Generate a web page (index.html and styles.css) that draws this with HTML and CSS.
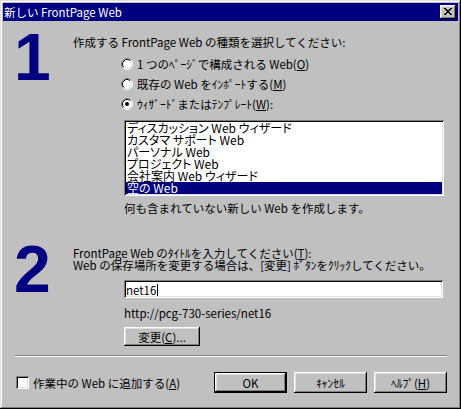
FILE: index.html
```html
<!DOCTYPE html>
<html lang="ja">
<head>
<meta charset="utf-8">
<title>新しい FrontPage Web</title>
<link rel="stylesheet" href="styles.css">
</head>
<body>
<div class="window">
  <div class="titlebar">
    <span class="title">新しい FrontPage Web</span>
    <div class="close">
      <svg class="close-x" width="8" height="7" viewBox="0 0 8 7" shape-rendering="crispEdges">
        <g fill="#000">
          <rect x="0" y="0" width="2" height="1"/><rect x="6" y="0" width="2" height="1"/>
          <rect x="1" y="1" width="2" height="1"/><rect x="5" y="1" width="2" height="1"/>
          <rect x="2" y="2" width="4" height="1"/>
          <rect x="3" y="3" width="2" height="1"/>
          <rect x="2" y="4" width="4" height="1"/>
          <rect x="1" y="5" width="2" height="1"/><rect x="5" y="5" width="2" height="1"/>
          <rect x="0" y="6" width="2" height="1"/><rect x="6" y="6" width="2" height="1"/>
        </g>
      </svg>
    </div>
  </div>
  <div class="client">
    <section class="step">
      <div class="num">1</div>
      <div class="step-body">
        <p class="prompt">作成する FrontPage Web の種類を選択してください:</p>
        <div class="radios">
          <div class="radio">
            <svg class="rb" width="12" height="12" viewBox="0 0 12 12"><circle cx="6" cy="6" r="5" fill="#fff"/><path d="M2.11 9.89 A5.5 5.5 0 0 1 9.89 2.11" fill="none" stroke="#808080"/><path d="M9.89 2.11 A5.5 5.5 0 0 1 2.11 9.89" fill="none" stroke="#fff"/><path d="M2.82 9.18 A4.5 4.5 0 0 1 9.18 2.82" fill="none" stroke="#000"/><path d="M9.18 2.82 A4.5 4.5 0 0 1 2.82 9.18" fill="none" stroke="#dfdfdf"/></svg>
            <span>1 つのﾍﾟｰｼﾞで構成される Web(<u>O</u>)</span>
          </div>
          <div class="radio">
            <svg class="rb" width="12" height="12" viewBox="0 0 12 12"><circle cx="6" cy="6" r="5" fill="#fff"/><path d="M2.11 9.89 A5.5 5.5 0 0 1 9.89 2.11" fill="none" stroke="#808080"/><path d="M9.89 2.11 A5.5 5.5 0 0 1 2.11 9.89" fill="none" stroke="#fff"/><path d="M2.82 9.18 A4.5 4.5 0 0 1 9.18 2.82" fill="none" stroke="#000"/><path d="M9.18 2.82 A4.5 4.5 0 0 1 2.82 9.18" fill="none" stroke="#dfdfdf"/></svg>
            <span>既存の Web をｲﾝﾎﾟｰﾄする(<u>M</u>)</span>
          </div>
          <div class="radio">
            <svg class="rb" width="12" height="12" viewBox="0 0 12 12"><circle cx="6" cy="6" r="5" fill="#fff"/><path d="M2.11 9.89 A5.5 5.5 0 0 1 9.89 2.11" fill="none" stroke="#808080"/><path d="M9.89 2.11 A5.5 5.5 0 0 1 2.11 9.89" fill="none" stroke="#fff"/><path d="M2.82 9.18 A4.5 4.5 0 0 1 9.18 2.82" fill="none" stroke="#000"/><path d="M9.18 2.82 A4.5 4.5 0 0 1 2.82 9.18" fill="none" stroke="#dfdfdf"/><circle cx="6" cy="6" r="2" fill="#000"/></svg>
            <span>ｳｨｻﾞｰﾄﾞまたはﾃﾝﾌﾟﾚｰﾄ(<u>W</u>):</span>
          </div>
        </div>
        <ul class="list">
          <li>ディスカッション Web ウィザード</li>
          <li>カスタマ サポート Web</li>
          <li>パーソナル Web</li>
          <li>プロジェクト Web</li>
          <li>会社案内 Web ウィザード</li>
          <li class="selected">空の Web</li>
        </ul>
        <p class="desc">何も含まれていない新しい Web を作成します。</p>
      </div>
    </section>
    <section class="step step2">
      <div class="num">2</div>
      <div class="step-body">
        <p class="line">FrontPage Web のﾀｲﾄﾙを入力してください(<u>T</u>):</p>
        <p class="line">Web の保存場所を変更する場合は、[変更] ﾎﾞﾀﾝをｸﾘｯｸしてください。</p>
        <div class="textbox"><span>net16</span><span class="caret"></span></div>
        <p class="url">http://pcg-730-series/net16</p>
        <div class="btn change">変更(<u>C</u>)...</div>
      </div>
    </section>
    <div class="separator"></div>
    <div class="footer">
      <div class="check"></div>
      <span class="check-label">作業中の Web に追加する(<u>A</u>)</span>
      <div class="buttons">
        <div class="btn default">OK</div>
        <div class="btn">ｷｬﾝｾﾙ</div>
        <div class="btn">ﾍﾙﾌﾟ(<u>H</u>)</div>
      </div>
    </div>
  </div>
</div>
</body>
</html>
```
FILE: styles.css
```css
html, body {
  margin: 0;
  padding: 0;
  background: #c0c0c0;
}
body {
  width: 461px;
  height: 409px;
  overflow: hidden;
  font-family: "Noto Sans CJK JP", "Noto Sans", sans-serif;
  font-size: 11.5px;
  color: #000;
}
p { margin: 0; }
u { text-underline-offset: 1px; }

.window {
  box-sizing: border-box;
  width: 461px;
  height: 409px;
  padding: 3px;
  background: #c0c0c0;
  box-shadow: inset -1px -1px #000, inset 1px 1px #dfdfdf,
              inset -2px -2px #808080, inset 2px 2px #fff;
  display: flex;
  flex-direction: column;
}

.titlebar {
  height: 18px;
  background: #000080;
  color: #fff;
  display: flex;
  align-items: center;
  padding: 0 2px 0 1px;
}
.title {
  flex: 1;
  line-height: 18px;
  white-space: nowrap;
  font-size: 11.5px;
}
.close {
  width: 16px;
  height: 14px;
  box-sizing: border-box;
  background: #c0c0c0;
  box-shadow: inset -1px -1px #000, inset 1px 1px #fff,
              inset -2px -2px #808080, inset 2px 2px #dfdfdf;
  display: flex;
  padding: 3px 0 0 4px;
}
.close-x { display: block; }

.client {
  flex: 1;
  padding-top: 3px;
  display: flex;
  flex-direction: column;
}

.step { display: flex; }
.step2 { margin-top: 21px; }
.num {
  width: 59px;
  height: 66px;
  margin-left: 11px;
  font-family: "Liberation Sans", Arial, sans-serif;
  font-weight: bold;
  font-size: 66px;
  line-height: 66px;
  color: #000080;
}
.step-body {
  flex: 1;
  padding-top: 11px;
}

.prompt { line-height: 14px; white-space: nowrap; }

.radios {
  margin: 5px 0 0 48px;
}
.radio {
  height: 20px;
  display: flex;
  align-items: center;
  gap: 4px;
  white-space: nowrap;
  line-height: 14px;
}
.rb { display: block; flex: none; }

.list {
  list-style: none;
  margin: 6px 0 0 51px;
  padding: 2px;
  box-sizing: border-box;
  width: 320px;
  height: 76px;
  background: #fff;
  box-shadow: inset 1px 1px #808080, inset -1px -1px #fff,
              inset 2px 2px #000, inset -2px -2px #dfdfdf;
}
.list li {
  height: 12px;
  line-height: 12px;
  padding-left: 1px;
  font-size: 12px;
  font-feature-settings: "palt";
  white-space: nowrap;
}
.list li.selected {
  background: #000080;
  color: #fff;
}

.desc {
  margin: 5px 0 0 51px;
  line-height: 14px;
  white-space: nowrap;
}

.line { line-height: 12px; white-space: nowrap; }

.textbox {
  margin: 9px 0 0 51px;
  width: 319px;
  height: 18px;
  box-sizing: border-box;
  padding: 2px 2px 0 2px;
  background: #fff;
  line-height: 14px;
  display: flex;
  align-items: center;
  box-shadow: inset 1px 1px #808080, inset -1px -1px #fff,
              inset 2px 2px #000, inset -2px -2px #dfdfdf;
}
.caret {
  width: 1px;
  height: 12px;
  background: #000;
  margin-left: 1px;
}

.url {
  margin: 8px 0 0 51px;
  line-height: 14px;
  white-space: nowrap;
}

.btn {
  box-sizing: border-box;
  width: 73px;
  height: 21px;
  background: #c0c0c0;
  display: flex;
  align-items: center;
  justify-content: center;
  white-space: nowrap;
  line-height: 14px;
  box-shadow: inset -1px -1px #000, inset 1px 1px #fff,
              inset -2px -2px #808080, inset 2px 2px #dfdfdf;
}
.btn.default {
  box-shadow: inset 0 0 0 1px #000,
              inset -2px -2px #000, inset 2px 2px #fff,
              inset -3px -3px #808080, inset 3px 3px #dfdfdf;
}
.change {
  margin: 7px 0 0 51px;
  width: 76px;
  height: 19px;
}

.separator {
  margin: 9px 0 0 12px;
  width: 432px;
  border-top: 1px solid #808080;
  border-bottom: 1px solid #fff;
}

.footer {
  margin-top: 15px;
  height: 21px;
  display: flex;
  align-items: center;
  padding: 0 11px 0 13px;
}
.check {
  width: 13px;
  height: 13px;
  box-sizing: border-box;
  background: #fff;
  flex: none;
  box-shadow: inset 1px 1px #808080, inset -1px -1px #fff,
              inset 2px 2px #000, inset -2px -2px #dfdfdf;
}
.check-label {
  margin-left: 4px;
  line-height: 14px;
  white-space: nowrap;
}
.buttons {
  margin-left: auto;
  display: flex;
  gap: 7px;
}
```
